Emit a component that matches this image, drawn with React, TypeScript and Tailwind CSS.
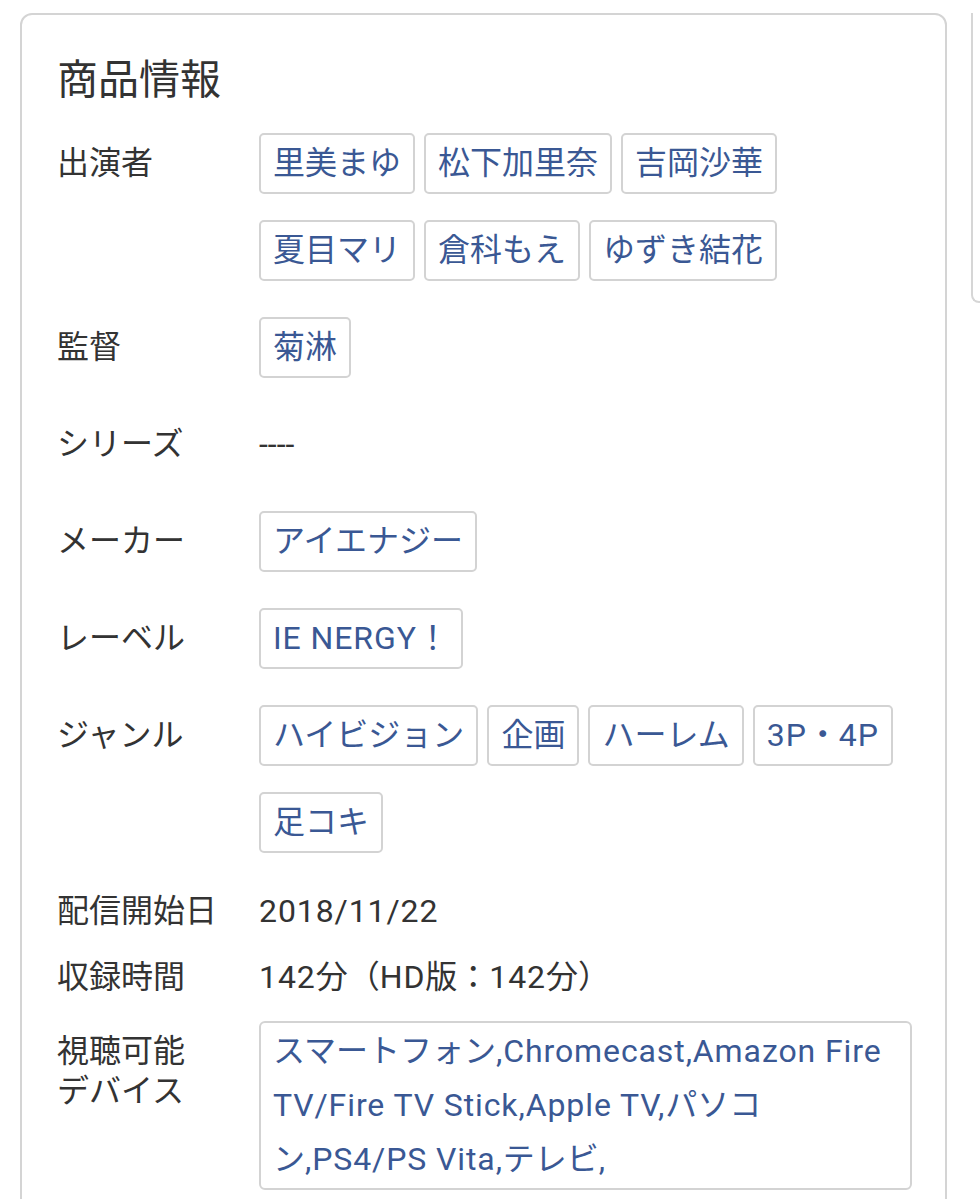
const font = { fontFamily: 'Roboto, "Noto Sans CJK JP", sans-serif' };

interface RowProps {
  label: React.ReactNode;
  children: React.ReactNode;
}

// latin text in the original renders a touch wider than Roboto here
function L({ children }: { children: React.ReactNode }) {
  return <span className="tracking-[0.9px]">{children}</span>;
}

function ChipRow({ label, children }: RowProps) {
  return (
    <div className="flex pb-[15px]">
      <div className="w-[202px] shrink-0 pt-[8px] text-[32px] leading-[45px] text-[#333]">{label}</div>
      <div className="flex flex-1 flex-wrap gap-x-[9px] gap-y-[26px]">{children}</div>
    </div>
  );
}

function Chip({ children }: { children: React.ReactNode }) {
  return (
    <span className="rounded-[5px] border-2 border-[#d3d3d3] px-[12px] py-[6px] text-[32px] leading-[45px] text-[#3a5894]">
      {children}
    </span>
  );
}

function TextRow({ label, children }: RowProps) {
  return (
    <div className="flex text-[32px] leading-[45px] text-[#333]">
      <div className="w-[202px] shrink-0">{label}</div>
      <div className="flex-1">{children}</div>
    </div>
  );
}

export default function App() {
  const cast = ['里美まゆ', '松下加里奈', '吉岡沙華', '夏目マリ', '倉科もえ', 'ゆずき結花'];

  return (
    <div className="relative min-h-[1199px] bg-white" style={font}>
      <div className="absolute right-0 top-0 h-[290px] w-[9px] rounded-bl-[8px] border-b-2 border-l-2 border-[#d6d6d6]" />

      <div className="ml-[20px] mt-[13px] w-[927px] rounded-[12px] border-2 border-[#d4d4d4] pb-[40px] pl-[35px] pr-[33px] pt-[37px]">
        <h2 className="text-[41px] leading-[56px] text-[#333]">商品情報</h2>

        <div className="mt-[25px] flex flex-col gap-[21px]">
          <ChipRow label="出演者">
            {cast.map((c) => (
              <Chip key={c}>{c}</Chip>
            ))}
          </ChipRow>

          <ChipRow label="監督">
            <Chip>菊淋</Chip>
          </ChipRow>

          <ChipRow label="シリーズ">
            <span className="py-[8px] text-[32px] leading-[45px] text-[#333]">----</span>
          </ChipRow>

          <ChipRow label="メーカー">
            <Chip>アイエナジー</Chip>
          </ChipRow>

          <ChipRow label="レーベル">
            <Chip>
              <L>IE NERGY</L>！
            </Chip>
          </ChipRow>

          <ChipRow label="ジャンル">
            <Chip>ハイビジョン</Chip>
            <Chip>企画</Chip>
            <Chip>ハーレム</Chip>
            <Chip>
              <L>3P</L>・<L>4P</L>
            </Chip>
            <Chip>足コキ</Chip>
          </ChipRow>

          <TextRow label="配信開始日">
            <L>2018/11/22</L>
          </TextRow>

          <TextRow label="収録時間">
            <L>142</L>分（<L>HD</L>版：<L>142</L>分）
          </TextRow>

          <div className="flex">
            <div className="w-[202px] shrink-0 pt-[10px] text-[32px] leading-[40px] text-[#333]">
              視聴可能
              <br />
              デバイス
            </div>
            <div className="flex-1 whitespace-nowrap rounded-[6px] border-2 border-[#d3d3d3] px-[12px] pb-[2px] pt-[1px] text-[32px] leading-[54px] text-[#3a5894]">
              スマートフォン<L>,Chromecast,Amazon Fire</L>
              <br />
              <L>TV/Fire TV Stick,Apple TV,</L>パソコ
              <br />
              ン<L>,PS4/PS Vita,</L>テレビ,
            </div>
          </div>
        </div>
      </div>
    </div>
  );
}
